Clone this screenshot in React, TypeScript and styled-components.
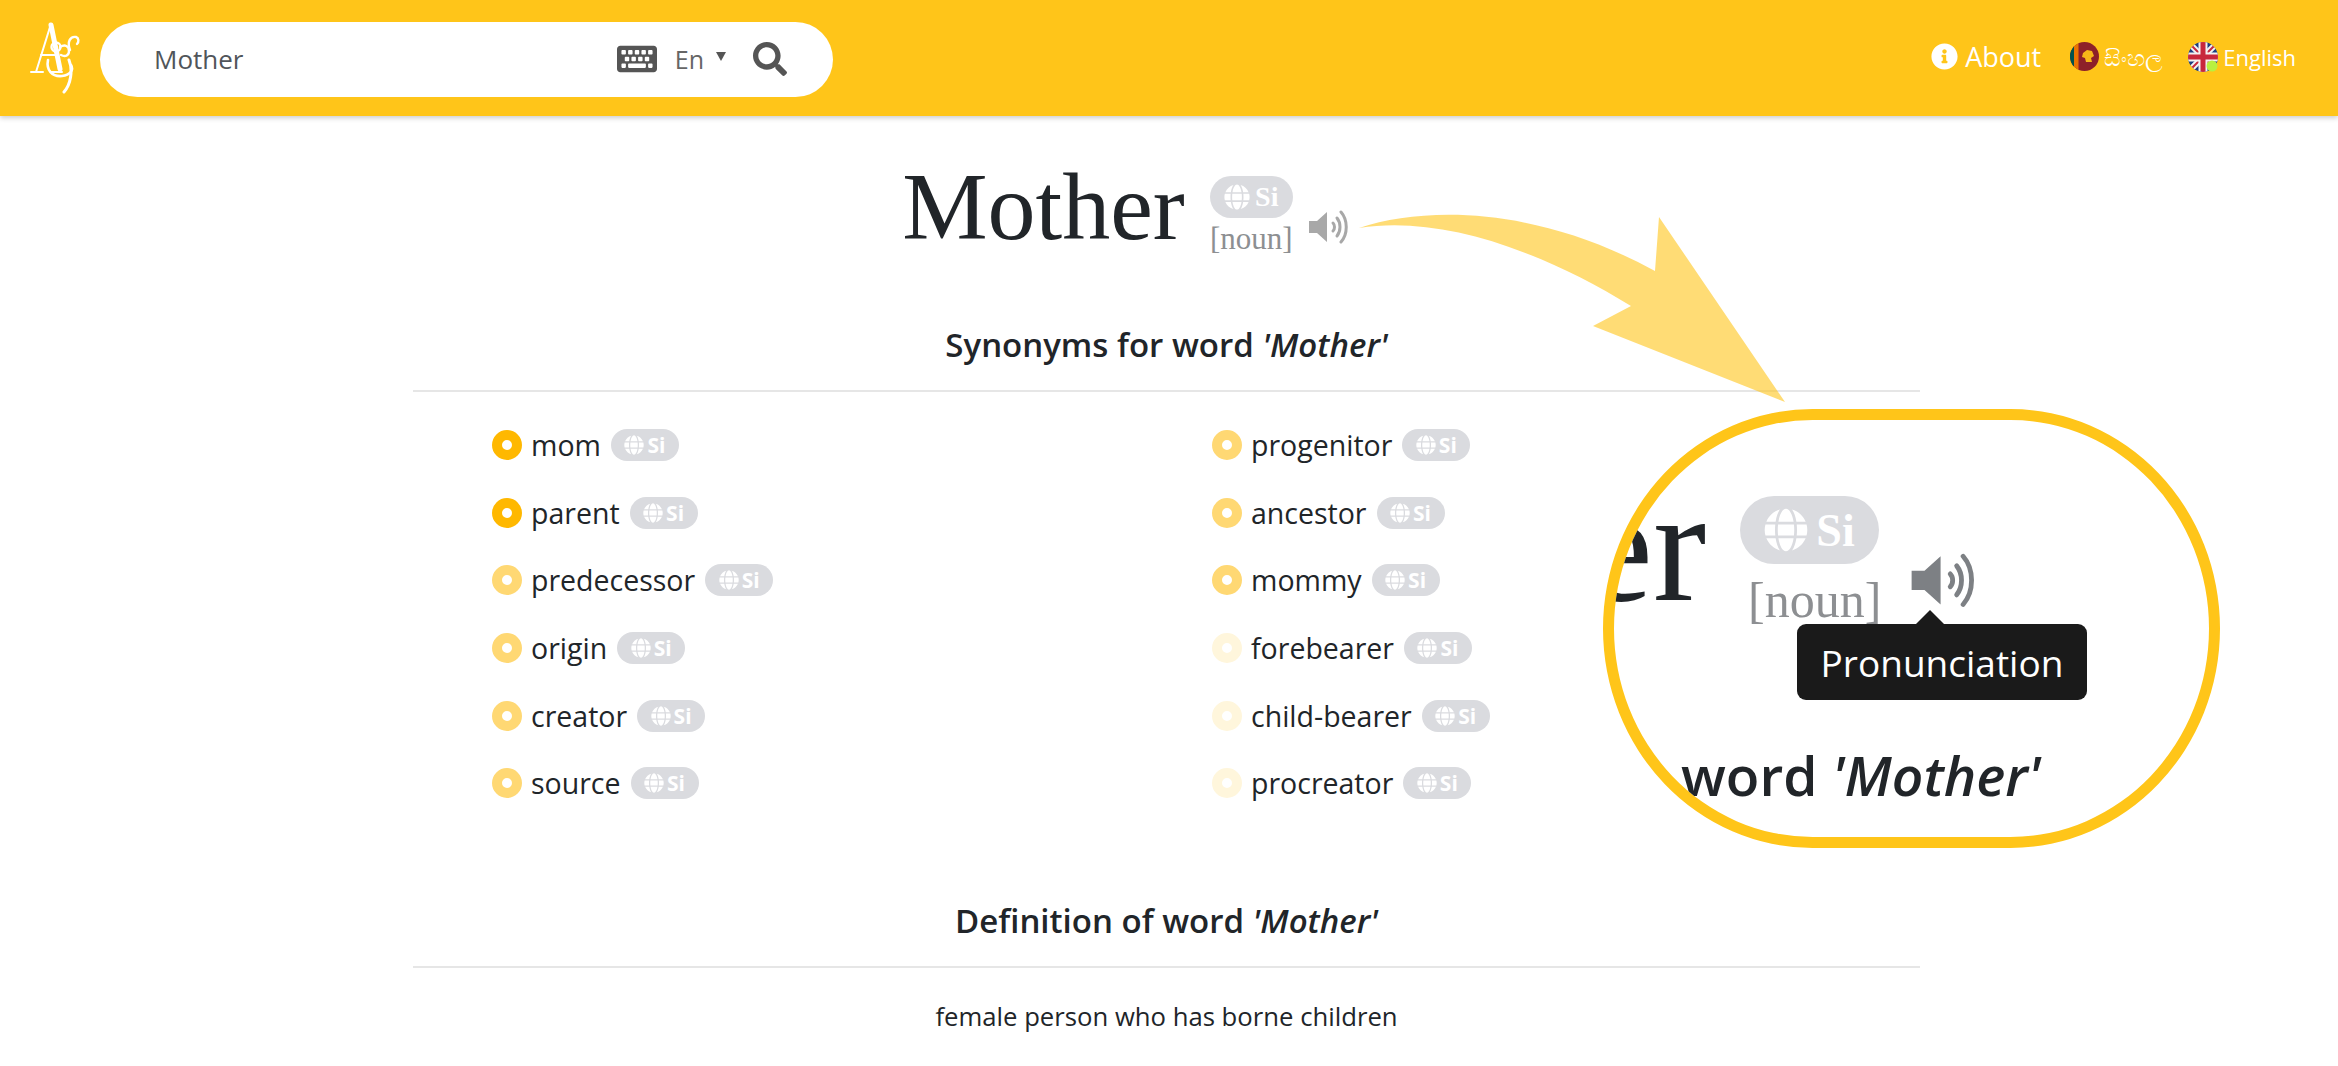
import React from "react";
import styled, { createGlobalStyle } from "styled-components";
import { FaGlobe, FaInfoCircle, FaKeyboard, FaSearch } from "react-icons/fa";

const GlobalStyle = createGlobalStyle`
  html, body {
    margin: 0;
    padding: 0;
    height: 1066px;
    overflow: hidden;
    background: #fff;
    color: #212529;
    font-family: "Open Sans", "Noto Sans", sans-serif;
  }
`;

const Page = styled.div`
  position: relative;
  width: 2338px;
  height: 1066px;
  overflow: hidden;
`;

const Header = styled.header`
  display: flex;
  align-items: center;
  justify-content: space-between;
  height: 116px;
  padding: 0 42px 0 30px;
  box-sizing: border-box;
  background: #ffc519;
  box-shadow: 0 2px 5px rgba(0, 0, 0, 0.2);
`;

const HeaderLeft = styled.div`
  display: flex;
  align-items: center;
  gap: 20px;
`;

const SearchBox = styled.div`
  display: flex;
  align-items: center;
  width: 733px;
  height: 75px;
  margin-top: 2px;
  padding: 0 46px 0 54px;
  box-sizing: border-box;
  background: #fff;
  border-radius: 38px;
  color: #555;
`;

const SearchText = styled.span`
  flex: 1;
  font-size: 26px;
  color: #50555a;
`;

const LangPick = styled.span`
  display: flex;
  align-items: center;
  gap: 12px;
  margin: 0 27px 0 18px;
  font-size: 25px;
  color: #666;
`;

const Caret = styled.span`
  width: 0;
  height: 0;
  margin-top: -6px;
  border-left: 5px solid transparent;
  border-right: 5px solid transparent;
  border-top: 9px solid #555;
`;

const Nav = styled.nav`
  display: flex;
  align-items: center;
  margin-top: -3px;
  color: #fff;
`;

const NavItem = styled.a<{ $size: number; $gap: number; $left: number }>`
  display: flex;
  align-items: center;
  gap: ${(p) => p.$gap}px;
  margin-left: ${(p) => p.$left}px;
  font-size: ${(p) => p.$size}px;
`;

const Main = styled.main`
  width: 1507px;
  margin-left: 413px;
`;

const TitleRow = styled.div`
  display: flex;
  justify-content: center;
  align-items: flex-start;
  height: 155px;
  padding: 36px 82px 0 0;
  box-sizing: border-box;
  font-family: "Liberation Serif", serif;
`;

const Word = styled.h1`
  margin: 0 23px 0 0;
  font-size: 96px;
  font-weight: 400;
  line-height: 110px;
`;

const WordMeta = styled.div`
  display: flex;
  flex-direction: column;
  align-items: center;
  padding: 24px 0 0 2px;
`;

const Chip = styled.span<{ $big?: boolean }>`
  display: inline-flex;
  align-items: center;
  justify-content: center;
  gap: ${(p) => (p.$big ? 8 : 3)}px;
  width: ${(p) => (p.$big ? 139 : 68)}px;
  height: ${(p) => (p.$big ? 68 : 32)}px;
  border-radius: ${(p) => (p.$big ? 34 : 16)}px;
  background: #dadbdf;
  color: #fff;
  font-size: ${(p) => (p.$big ? 42 : 21)}px;
  font-weight: 700;
`;

const TitleChip = styled(Chip)`
  width: 83px;
  height: 42px;
  border-radius: 21px;
  gap: 5px;
  font-size: 28px;
`;

const PartOfSpeech = styled.span`
  margin-top: 3px;
  font-size: 31px;
  line-height: 36px;
  color: #8d8f92;
`;

const SpeakerButton = styled.span`
  display: block;
  margin: 58px 0 0 15px;
  line-height: 0;
`;

const SectionTitle = styled.h2<{ $height: number }>`
  display: flex;
  align-items: flex-end;
  justify-content: center;
  height: ${(p) => p.$height}px;
  margin: 0;
  padding-bottom: 23px;
  box-sizing: border-box;
  font-size: 33px;
  line-height: 44px;
  font-weight: 600;
  white-space: pre;
  border-bottom: 2px solid #e6e6e6;
  em {
    font-style: italic;
  }
`;

const SynonymGrid = styled.ul`
  display: grid;
  grid-template-columns: 720px 1fr;
  grid-auto-flow: column;
  grid-template-rows: repeat(6, 67.7px);
  margin: 19px 0 0;
  padding: 0 0 0 79px;
  list-style: none;
`;

const SynonymRow = styled.li`
  display: flex;
  align-items: center;
  font-size: 28.5px;
`;

const dotColors = { strong: "#ffb800", mid: "#ffd873", weak: "#fff6dc" };

const Dot = styled.span<{ $level: keyof typeof dotColors }>`
  width: 30px;
  height: 30px;
  margin-right: 9px;
  box-sizing: border-box;
  border: 10px solid ${(p) => dotColors[p.$level]};
  border-radius: 50%;
  background: #fff;
`;

const SynonymChip = styled(Chip)`
  margin-left: 10px;
`;

const DefinitionText = styled.p`
  margin: 31px 0 0;
  text-align: center;
  font-size: 25.7px;
  line-height: 36px;
`;

const ArrowLayer = styled.svg`
  position: absolute;
  left: 0;
  top: 0;
  pointer-events: none;
`;

const Callout = styled.div`
  position: absolute;
  left: 1603px;
  top: 409px;
  width: 617px;
  height: 439px;
  box-sizing: border-box;
  border: 11px solid #ffc519;
  border-radius: 210px / 220px;
  background: #fff;
  overflow: hidden;
`;

const CalloutWord = styled.span`
  position: absolute;
  left: -32px;
  top: 46px;
  font-family: "Liberation Serif", serif;
  font-size: 160px;
  line-height: 1;
`;

const CalloutChip = styled(Chip)`
  position: absolute;
  left: 126px;
  top: 76px;
  font-family: "Liberation Serif", serif;
  font-size: 46px;
`;

const CalloutNoun = styled.span`
  position: absolute;
  left: 134px;
  top: 155px;
  font-family: "Liberation Serif", serif;
  font-size: 50px;
  line-height: 50px;
  color: #8d8f92;
`;

const CalloutSpeaker = styled.span`
  position: absolute;
  left: 296px;
  top: 133px;
  line-height: 0;
`;

const Tooltip = styled.div`
  position: absolute;
  left: 183px;
  top: 204px;
  width: 290px;
  height: 76px;
  display: flex;
  align-items: center;
  justify-content: center;
  background: #1a1a1a;
  border-radius: 9px;
  color: #fff;
  font-size: 37px;
  &::before {
    content: "";
    position: absolute;
    left: 119px;
    top: -14px;
    width: 0;
    height: 0;
    border-left: 14px solid transparent;
    border-right: 14px solid transparent;
    border-bottom: 14px solid #1a1a1a;
  }
`;

const CalloutHeading = styled.span`
  position: absolute;
  left: 67px;
  top: 322px;
  font-size: 55px;
  font-weight: 600;
  line-height: 66px;
  white-space: pre;
`;

const columnOne: [string, keyof typeof dotColors][] = [
  ["mom", "strong"],
  ["parent", "strong"],
  ["predecessor", "mid"],
  ["origin", "mid"],
  ["creator", "mid"],
  ["source", "mid"],
];

const columnTwo: [string, keyof typeof dotColors][] = [
  ["progenitor", "mid"],
  ["ancestor", "mid"],
  ["mommy", "mid"],
  ["forebearer", "weak"],
  ["child-bearer", "weak"],
  ["procreator", "weak"],
];

function SpeakerIcon({ width, color }: { width: number; color: string }) {
  return (
    <svg width={width} height={(width * 34) / 41} viewBox="0 0 41 34" fill="none">
      <path d="M1 11h8L19 2v30L9 23H1z" fill={color} />
      <path d="M25 13c2 2 2 6 0 8" stroke={color} strokeWidth="3" strokeLinecap="round" />
      <path d="M29 8c4 5 4 13 0 18" stroke={color} strokeWidth="3" strokeLinecap="round" />
      <path d="M33 2c7 8 7 22 0 30" stroke={color} strokeWidth="3" strokeLinecap="round" />
    </svg>
  );
}

function Logo() {
  return (
    <svg width="50" height="72" viewBox="0 0 50 72" fill="none" stroke="#fff" strokeLinecap="round">
      <path d="M1 50h12M21 50h11" strokeWidth="2" />
      <path d="M6 50L20 5" strokeWidth="2" />
      <path d="M21 3l9 44" strokeWidth="5" />
      <path d="M11 33h14" strokeWidth="2" />
      <circle cx="26" cy="25" r="4.5" strokeWidth="2.4" />
      <path d="M30 25c5-3 9-1 9 4s-4 6-8 4" strokeWidth="2.4" />
      <path d="M18 38c-2 10 4 17 14 16 8-1 12-6 9-11" strokeWidth="2.6" />
      <path d="M40 28c-3-8 0-14 6-13 3 1 3 5 1 7" strokeWidth="2.4" />
      <path d="M39 38c4 10 2 24-5 32" strokeWidth="3" />
    </svg>
  );
}

function LankaFlag() {
  return (
    <svg width="29" height="29" viewBox="0 0 29 29">
      <defs>
        <clipPath id="lk">
          <circle cx="14.5" cy="14.5" r="14.5" />
        </clipPath>
      </defs>
      <g clipPath="url(#lk)">
        <rect width="29" height="29" fill="#8d2029" />
        <rect width="4" height="29" fill="#00534e" />
        <rect x="4" width="4.5" height="29" fill="#eb7400" />
        <path d="M13 11l4-3 5 1 2 5-3 2 1 4h-6l-1-4-3-1z" fill="#f7b718" />
      </g>
    </svg>
  );
}

function UkFlag() {
  return (
    <svg width="30" height="30" viewBox="0 0 30 30">
      <defs>
        <clipPath id="uk">
          <circle cx="15" cy="15" r="15" />
        </clipPath>
      </defs>
      <g clipPath="url(#uk)">
        <rect width="30" height="30" fill="#1d3f80" />
        <path d="M0 0L30 30M30 0L0 30" stroke="#f2f2f2" strokeWidth="6" />
        <path d="M0 0L30 30M30 0L0 30" stroke="#c8283c" strokeWidth="2" />
        <path d="M15 0V30M0 15H30" stroke="#f2f2f2" strokeWidth="9" />
        <path d="M15 0V30M0 15H30" stroke="#c8283c" strokeWidth="5" />
      </g>
      <circle cx="24" cy="24" r="5.5" fill="#b8f040" />
    </svg>
  );
}

function Synonym({ word, level }: { word: string; level: keyof typeof dotColors }) {
  return (
    <SynonymRow>
      <Dot $level={level} />
      {word}
      <SynonymChip>
        <FaGlobe size={20} />
        Si
      </SynonymChip>
    </SynonymRow>
  );
}

export default function App() {
  return (
    <Page>
      <GlobalStyle />
      <Header>
        <HeaderLeft>
          <Logo />
          <SearchBox>
            <SearchText>Mother</SearchText>
            <FaKeyboard size={40} color="#555" />
            <LangPick>
              En <Caret />
            </LangPick>
            <FaSearch size={34} color="#555" />
          </SearchBox>
        </HeaderLeft>
        <Nav>
          <NavItem $size={27} $gap={7} $left={29}>
            <FaInfoCircle size={27} />
            About
          </NavItem>
          <NavItem $size={23} $gap={5} $left={29}>
            <LankaFlag />
            සිංහල
          </NavItem>
          <NavItem $size={22} $gap={5} $left={25}>
            <UkFlag />
            English
          </NavItem>
        </Nav>
      </Header>
      <Main>
        <TitleRow>
          <Word>Mother</Word>
          <WordMeta>
            <TitleChip>
              <FaGlobe size={26} />
              Si
            </TitleChip>
            <PartOfSpeech>[noun]</PartOfSpeech>
          </WordMeta>
          <SpeakerButton>
            <SpeakerIcon width={41} color="#a8a8a8" />
          </SpeakerButton>
        </TitleRow>
        <SectionTitle $height={121}>
          Synonyms for word <em>'Mother'</em>
        </SectionTitle>
        <SynonymGrid>
          {[...columnOne, ...columnTwo].map(([word, level]) => (
            <Synonym key={word} word={word} level={level} />
          ))}
        </SynonymGrid>
        <SectionTitle $height={151}>
          Definition of word <em>'Mother'</em>
        </SectionTitle>
        <DefinitionText>female person who has borne children</DefinitionText>
      </Main>
      <ArrowLayer width="2338" height="1066" viewBox="0 0 2338 1066">
        <path
          d="M1359 228C1430 205 1540 208 1655 271L1659 217L1785 402L1593 326L1631 306C1540 250 1440 215 1359 228Z"
          fill="#ffc519"
          fillOpacity="0.6"
        />
      </ArrowLayer>
      <Callout>
        <CalloutWord>er</CalloutWord>
        <CalloutChip $big>
          <FaGlobe size={44} />
          Si
        </CalloutChip>
        <CalloutNoun>[noun]</CalloutNoun>
        <CalloutSpeaker>
          <SpeakerIcon width={66} color="#7d8084" />
        </CalloutSpeaker>
        <Tooltip>Pronunciation</Tooltip>
        <CalloutHeading>
          word <em>'Mother'</em>
        </CalloutHeading>
      </Callout>
    </Page>
  );
}
